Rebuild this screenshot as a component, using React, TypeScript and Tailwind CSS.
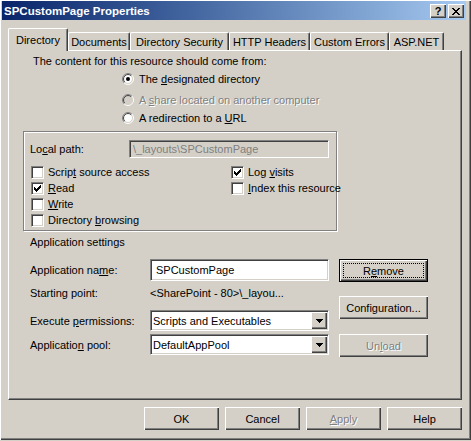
import type { ReactNode } from 'react'

// Win2000 classic "Properties" dialog for an IIS virtual directory.
const RAISED = 'bg-[#d4d0c8] shadow-[inset_1px_1px_0_#fff,inset_-1px_-1px_0_#404040,inset_-2px_-2px_0_#808080]'
const SUNKEN =
  'border border-t-[#808080] border-l-[#808080] border-r-white border-b-white shadow-[inset_1px_1px_0_#404040,inset_-1px_-1px_0_#d4d0c8]'
const DIS = 'text-[#808080] [text-shadow:1px_1px_0_#fff]'

function Radio({ checked, disabled }: { checked?: boolean; disabled?: boolean }) {
  const arc = (r: number, first: boolean) => {
    const d = r * 0.7071
    return first
      ? `M${6 - d} ${6 + d}A${r} ${r} 0 0 1 ${6 + d} ${6 - d}`
      : `M${6 + d} ${6 - d}A${r} ${r} 0 0 1 ${6 - d} ${6 + d}`
  }
  return (
    <svg width="12" height="12" viewBox="0 0 12 12" className="shrink-0">
      <circle cx="6" cy="6" r="5" fill={disabled ? '#d4d0c8' : '#fff'} />
      <path d={arc(5.5, true)} stroke="#808080" fill="none" />
      <path d={arc(5.5, false)} stroke="#fff" fill="none" />
      <path d={arc(4.5, true)} stroke="#404040" fill="none" />
      <path d={arc(4.5, false)} stroke="#d4d0c8" fill="none" />
      {checked && <circle cx="6" cy="6" r="2" fill="#000" />}
    </svg>
  )
}

function Check({ checked }: { checked?: boolean }) {
  return (
    <span className={`relative block w-[13px] h-[13px] shrink-0 bg-white ${SUNKEN}`}>
      {checked && (
        <svg className="absolute left-[2px] top-[2px]" width="7" height="7" viewBox="0 0 7 7" shapeRendering="crispEdges">
          <rect x="6" y="0" width="1" height="1" />
          <rect x="5" y="1" width="2" height="1" />
          <rect x="0" y="2" width="1" height="1" />
          <rect x="4" y="2" width="3" height="1" />
          <rect x="0" y="3" width="2" height="1" />
          <rect x="3" y="3" width="3" height="1" />
          <rect x="0" y="4" width="5" height="1" />
          <rect x="1" y="5" width="3" height="1" />
          <rect x="2" y="6" width="1" height="1" />
        </svg>
      )}
    </span>
  )
}

function CheckRow({ checked, children }: { checked?: boolean; children: ReactNode }) {
  return (
    <div className="flex items-center gap-[4px] h-[16px]">
      <Check checked={checked} />
      <span className="whitespace-nowrap">{children}</span>
    </div>
  )
}

function Arrow() {
  return (
    <svg width="7" height="4" viewBox="0 0 7 4" shapeRendering="crispEdges">
      <rect x="0" y="0" width="7" height="1" />
      <rect x="1" y="1" width="5" height="1" />
      <rect x="2" y="2" width="3" height="1" />
      <rect x="3" y="3" width="1" height="1" />
    </svg>
  )
}

function Combo({ value }: { value: string }) {
  return (
    <div className={`flex items-center w-[179px] h-[21px] bg-white ${SUNKEN}`}>
      <span className="flex-1 pl-[2px] truncate">{value}</span>
      <span className={`flex items-center justify-center w-[16px] h-[17px] mr-px ${RAISED}`}>
        <Arrow />
      </span>
    </div>
  )
}

function Button({
  children,
  disabled,
  isDefault,
  className = '',
}: {
  children: ReactNode
  disabled?: boolean
  isDefault?: boolean
  className?: string
}) {
  return (
    <div
      className={`relative flex items-center justify-center h-[23px] ${RAISED} ${isDefault ? 'border border-black' : ''} ${
        disabled ? DIS : ''
      } ${className}`}
    >
      {children}
      {isDefault && <span className="absolute inset-[3px] border border-dotted border-black" />}
    </div>
  )
}

const TABS = [
  { label: 'Documents', w: 'w-[62px]' },
  { label: 'Directory Security', w: 'w-[99px]' },
  { label: 'HTTP Headers', w: 'w-[81px]' },
  { label: 'Custom Errors', w: 'w-[79px]' },
  { label: 'ASP.NET', w: 'w-[55px]' },
]

export default function App() {
  return (
    <div className="w-[471px] h-[441px] bg-[#d4d0c8] overflow-hidden font-['Liberation_Sans',Arial,sans-serif] text-[11px] leading-[14px] text-black">
      <div className="h-[440px] pt-[1px] pl-[2px] pr-[5px] shadow-[inset_1px_1px_0_#fff,inset_-1px_-1px_0_#404040,inset_-2px_-2px_0_#808080]">
        {/* title bar */}
        <div className="flex items-center h-[19px] pl-[2px] pr-[2px] bg-linear-to-r from-[#0a246a] to-[#a6caf0]">
          <span className="flex-1 text-white font-bold text-[11.5px]">SPCustomPage Properties</span>
          <div className="flex gap-[2px] pt-px">
            <span className={`flex items-center justify-center w-[16px] h-[14px] font-bold text-[11px] leading-none ${RAISED}`}>
              ?
            </span>
            <span className={`flex items-center justify-center w-[16px] h-[14px] ${RAISED}`}>
              <svg width="8" height="7" viewBox="0 0 8 7" shapeRendering="crispEdges">
                <rect x="0" y="0" width="2" height="1" />
                <rect x="6" y="0" width="2" height="1" />
                <rect x="1" y="1" width="2" height="1" />
                <rect x="5" y="1" width="2" height="1" />
                <rect x="2" y="2" width="4" height="1" />
                <rect x="3" y="3" width="2" height="1" />
                <rect x="2" y="4" width="4" height="1" />
                <rect x="1" y="5" width="2" height="1" />
                <rect x="5" y="5" width="2" height="1" />
                <rect x="0" y="6" width="2" height="1" />
                <rect x="6" y="6" width="2" height="1" />
              </svg>
            </span>
          </div>
        </div>

        <div className="ml-[6px] mr-[4px]">
          {/* tabs */}
          <div className="flex items-end h-[22px] mt-[8px]">
            <div className="relative z-10 -mb-px flex items-center justify-center w-[60px] h-[23px] bg-[#d4d0c8] border-t border-l border-r border-t-white border-l-white border-r-[#404040] rounded-t-[2px] shadow-[inset_-1px_0_0_#808080]">
              Directory
            </div>
            {TABS.map((t) => (
              <div
                key={t.label}
                className={`flex items-center justify-center ${t.w} h-[18px] whitespace-nowrap border-t border-l border-r border-t-white border-l-white border-r-[#404040] rounded-t-[2px] shadow-[inset_-1px_0_0_#808080]`}
              >
                {t.label}
              </div>
            ))}
          </div>

          {/* tab page */}
          <div className="h-[350px] border border-t-white border-l-white border-r-[#404040] border-b-[#404040] shadow-[inset_-1px_-1px_0_#808080]">
            <div className="mt-[3px] pl-[24px] h-[14px]">The content for this resource should come from:</div>

            <div className="ml-[113px]">
              <div className="flex items-center gap-[5px] h-[14px] mt-[4px]">
                <Radio checked />
                <span>
                  The <u>d</u>esignated directory
                </span>
              </div>
              <div className="flex items-center gap-[5px] h-[14px] mt-[7px]">
                <Radio disabled />
                <span className={DIS}>
                  A <u>s</u>hare located on another computer
                </span>
              </div>
              <div className="flex items-center gap-[5px] h-[14px] mt-[4px]">
                <Radio />
                <span>
                  A redirection to a <u>U</u>RL
                </span>
              </div>
            </div>

            {/* path + access group */}
            <div className="ml-[14px] mt-[6px] w-[314px] h-[100px] border border-[#808080] shadow-[inset_1px_1px_0_#fff,1px_1px_0_#fff]">
              <div className="flex items-center mt-[8px] pl-[6px]">
                <span className="w-[99px]">
                  Lo<u>c</u>al path:
                </span>
                <div className={`flex items-center w-[200px] h-[18px] bg-[#d4d0c8] pl-[3px] text-[#808080] ${SUNKEN}`}>
                  \_layouts\SPCustomPage
                </div>
              </div>
              <div className="grid grid-cols-[200px_1fr] mt-[6px] pl-[7px]">
                <div>
                  <CheckRow>
                    Scrip<u>t</u> source access
                  </CheckRow>
                  <CheckRow checked>
                    <u>R</u>ead
                  </CheckRow>
                  <CheckRow>
                    <u>W</u>rite
                  </CheckRow>
                  <CheckRow>
                    Directory <u>b</u>rowsing
                  </CheckRow>
                </div>
                <div>
                  <CheckRow checked>
                    Log <u>v</u>isits
                  </CheckRow>
                  <CheckRow>
                    <u>I</u>ndex this resource
                  </CheckRow>
                </div>
              </div>
            </div>

            <div className="ml-[21px] mt-[4px] h-[14px]">Application settings</div>

            <div className="flex ml-[21px] mt-[10px] gap-[10px]">
              <div>
                <div className="flex items-center h-[22px]">
                  <span className="w-[120px]">
                    Application na<u>m</u>e:
                  </span>
                  <div className={`flex items-center w-[179px] h-[22px] bg-white pl-[5px] ${SUNKEN}`}>SPCustomPage</div>
                </div>
                <div className="flex items-center h-[14px] mt-[5px]">
                  <span className="w-[120px]">Starting point:</span>
                  <span>&lt;SharePoint - 80&gt;\_layou...</span>
                </div>
                <div className="flex items-center h-[21px] mt-[10px]">
                  <span className="w-[120px]">
                    Execute <u>p</u>ermissions:
                  </span>
                  <Combo value="Scripts and Executables" />
                </div>
                <div className="flex items-center h-[21px] mt-[3px]">
                  <span className="w-[120px]">
                    Applicatio<u>n</u> pool:
                  </span>
                  <Combo value="DefaultAppPool" />
                </div>
              </div>
              <div>
                <Button isDefault className="w-[89px]">
                  R<u>e</u>move
                </Button>
                <Button className="w-[89px] mt-[14px]">Configuration...</Button>
                <Button disabled className="w-[89px] mt-[15px]">
                  Un<u>l</u>oad
                </Button>
              </div>
            </div>
          </div>

          {/* dialog buttons */}
          <div className="flex justify-end gap-[6px] mt-[7px]">
            <Button className="w-[75px]">OK</Button>
            <Button className="w-[75px]">Cancel</Button>
            <Button disabled className="w-[75px]">
              <u>A</u>pply
            </Button>
            <Button className="w-[75px]">Help</Button>
          </div>
        </div>
      </div>
    </div>
  )
}
